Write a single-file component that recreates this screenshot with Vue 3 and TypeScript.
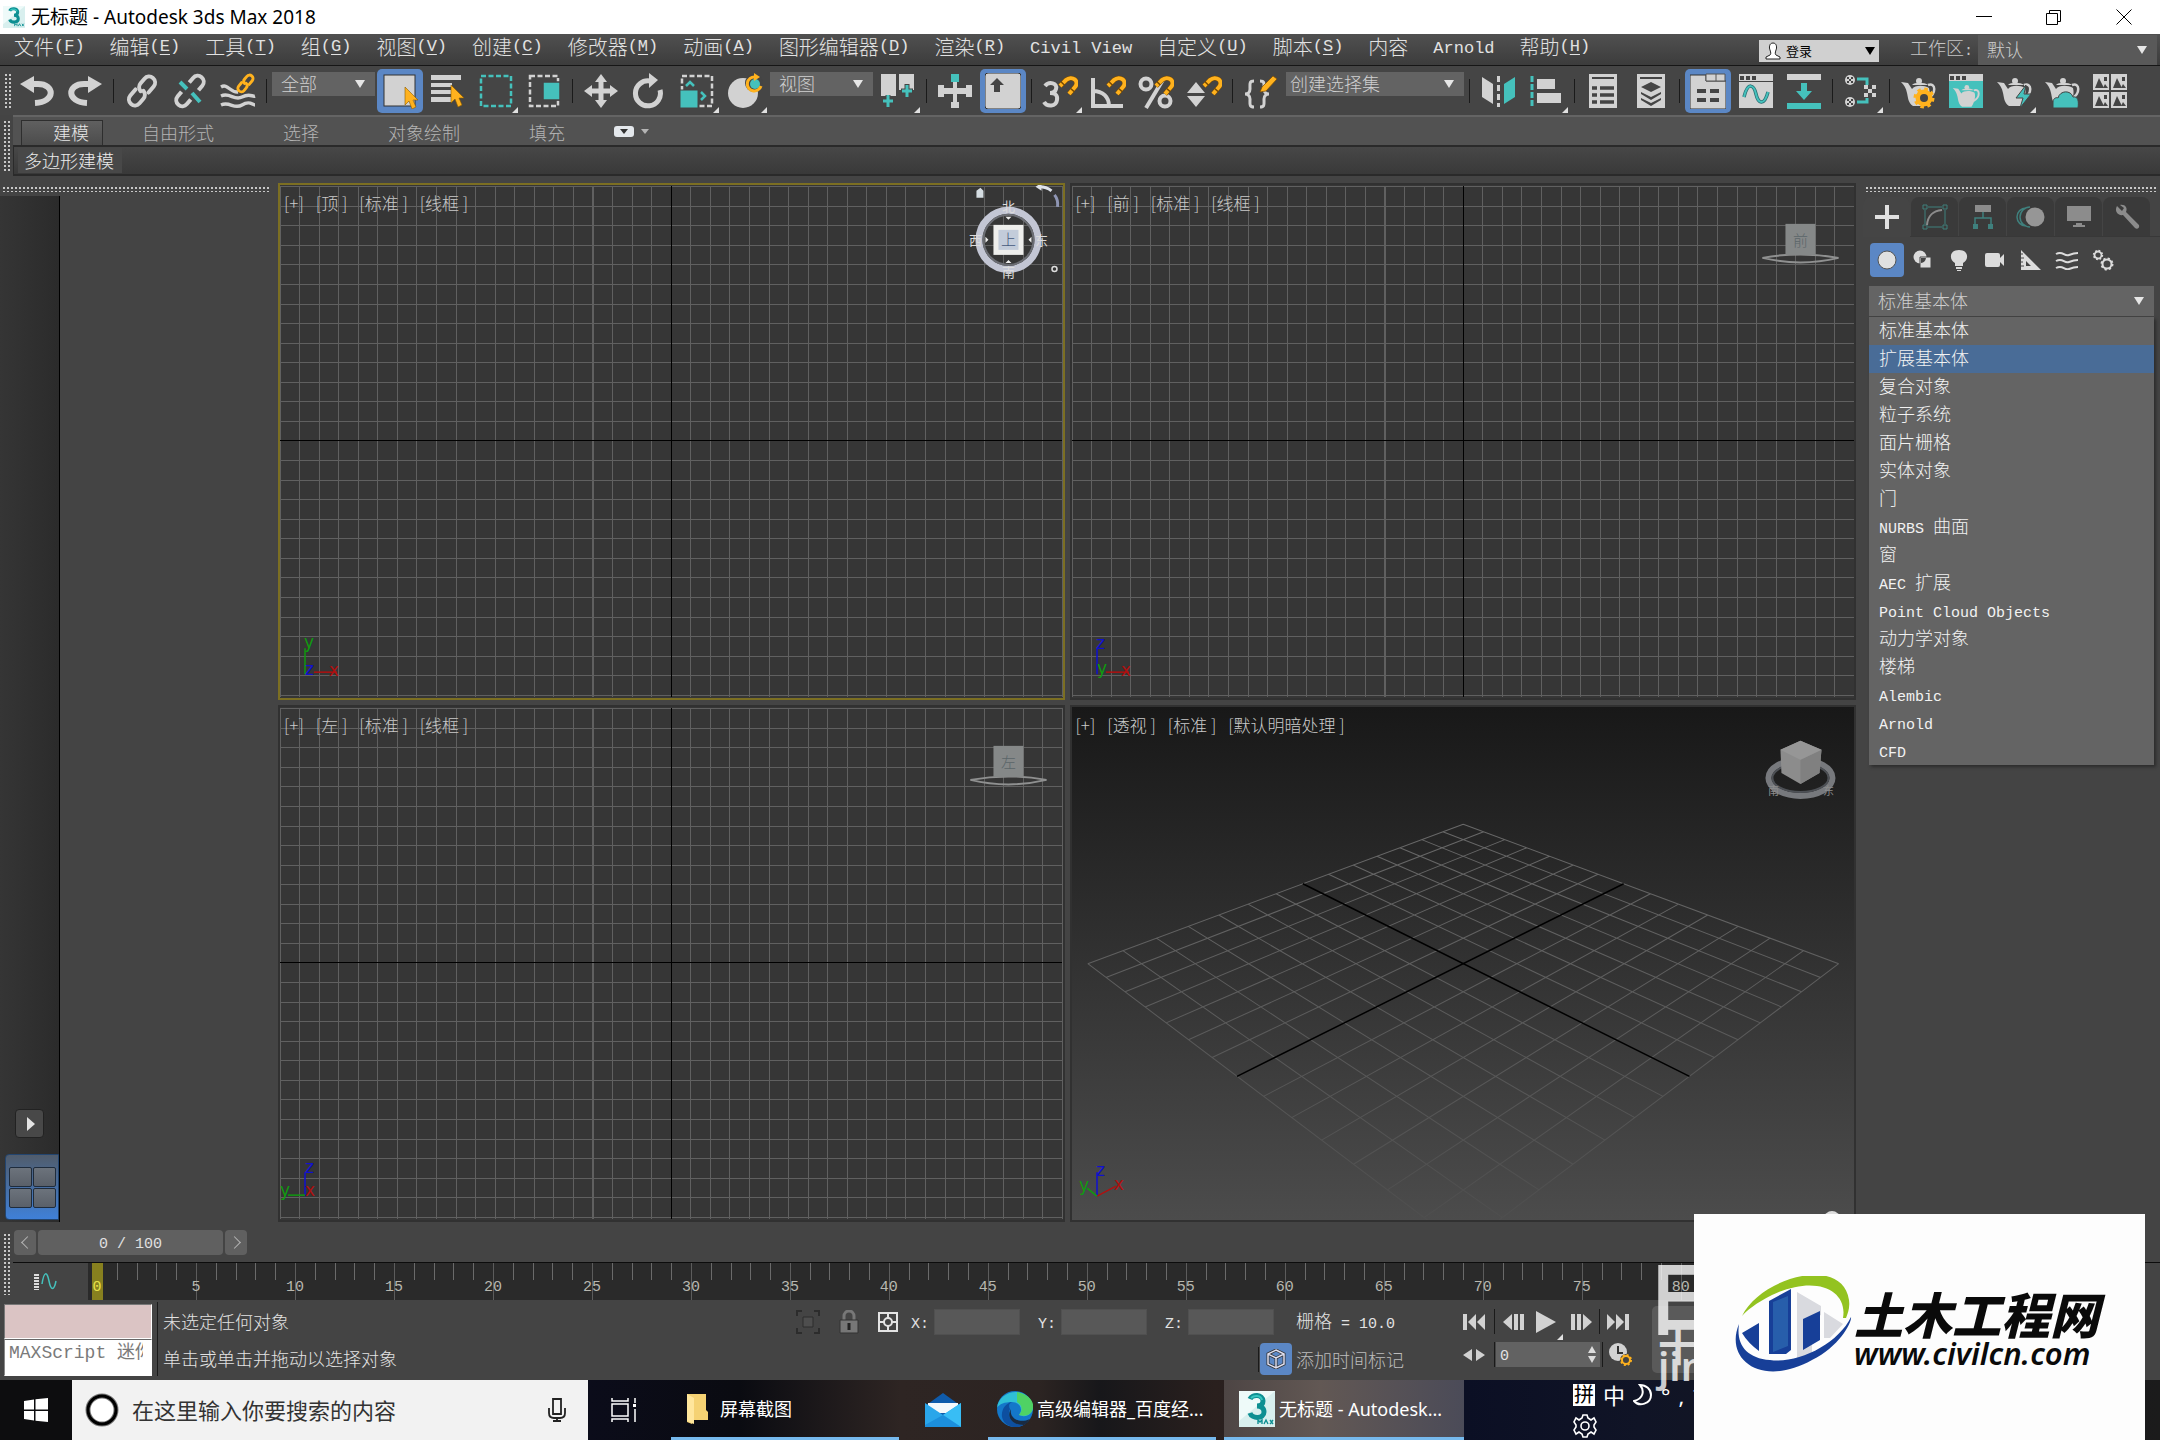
<script setup lang="ts">
import { h, ref } from 'vue'
import type { FunctionalComponent } from 'vue'

const L = '#d2d2d2'
const T = '#45c1bc'
const O = '#ffb21e'
const D = '#444444'

const cursor = (x: number, y: number) =>
  `<path transform="translate(${x} ${y})" d="M0 0V18L4 14L7 22L11 20L8 13H13Z" fill="${O}" stroke="#8a5a00" stroke-width=".6"/>`
const magnet = (x: number, y: number) =>
  `<path transform="translate(${x} ${y})" d="M1 10L7 4C13 -1 21 5 16 11L10 18" fill="none" stroke="#7a4b00" stroke-width="5"/>
   <path transform="translate(${x} ${y})" d="M1 10L7 4C13 -1 21 5 16 11L10 18" fill="none" stroke="${O}" stroke-width="4" stroke-dasharray="3 1.5 25 1.5 6"/>`
const chain = (c: string, w: number) =>
  `<g transform="rotate(-50 18 18)" fill="none" stroke="${c}" stroke-width="${w}" stroke-linecap="round">
   <path d="M15 12H7a6 6 0 0 0 0 12H13a6 6 0 0 0 6-5"/><path d="M21 24H29a6 6 0 0 0 0-12H23a6 6 0 0 0-6 5"/></g>`
const teapot = (c = L, ring = L) =>
  `<path d="M1 9L8 10L12 16C15 12 24 12 29 15C31 22 27 30 25 33H13C8 30 8 24 7 20C6 15 4 12 1 9Z" fill="${c}"/>
   <circle cx="19" cy="8" r="3" fill="${c}"/><path d="M12 12C14 9 25 9 28 12Z" fill="${c}"/>
   <path d="M28 12C36 9 37 21 27 26" fill="none" stroke="${ring}" stroke-width="2.5"/>`
const gear = (x: number, y: number, r: number, c: string, w: number) =>
  `<circle cx="${x}" cy="${y}" r="${r}" fill="none" stroke="${c}" stroke-width="${w}"/>
   <circle cx="${x}" cy="${y}" r="${r + w - 1}" fill="none" stroke="${c}" stroke-width="${w}" stroke-dasharray="${((r + w - 1) * Math.PI) / 8}"/>`
const check = (x: number, y: number) =>
  `<circle cx="${x}" cy="${y}" r="5" fill="${L}"/><path d="M${x - 3} ${y - 3}h2v2h2v-2h2v2h-2v2h2v2h-2v-2h-2v2h-2v-2h2v-2h-2z" fill="${D}"/>`
const logo3 =
  `<rect width="36" height="36" fill="#d8efee"/><path d="M0 0H36L0 30Z" fill="#eefaf9"/>
   <path d="M11 8C13 3 24 3 24 10C24 14 21 15 18 15C22 15 25 17 25 21C25 28 13 28 11 22" fill="none" stroke="#0d8f92" stroke-width="5"/>
   <path d="M12 7C15 4 22 4 23 9" fill="none" stroke="#37c6c0" stroke-width="2"/>
   <path d="M19 33v-4l2 2 2-2v4M25 33l2-4 2 4M31 29l3 4M34 29l-3 4" fill="none" stroke="#0d8f92" stroke-width="1.4"/>`

type Glyph = [number, number, string]
const glyphs: Record<string, Glyph> = {
  logo: [36, 36, logo3],
  undo: [36, 36, `<path d="M1 11L15 3V20Z" fill="${L}"/><path d="M14 11H19C36 11 37 29 16 30" fill="none" stroke="${L}" stroke-width="6"/>`],
  redo: [36, 36, `<path d="M35 11L21 3V20Z" fill="${L}"/><path d="M22 11H17C0 11 -1 29 20 30" fill="none" stroke="${L}" stroke-width="6"/>`],
  link: [36, 36, chain(L, 4)],
  unlink: [36, 36, `<g transform="rotate(-50 18 18)" fill="none" stroke="${L}" stroke-width="4"><path d="M12 12H6a6 6 0 0 0 0 12H12"/><path d="M24 24H30a6 6 0 0 0 0-12H24"/></g><path d="M8 9L15 16M20 20L28 29" stroke="${T}" stroke-width="4"/>`],
  bind: [36, 36, `<g fill="none" stroke="${L}" stroke-width="3.5"><path d="M1 14C8 10 10 20 18 19"/><path d="M1 23C10 19 14 28 22 24S32 24 35 23"/><path d="M1 32C10 28 14 37 22 32S32 32 35 32"/></g><g transform="translate(15 0) scale(.58)">${chain(O, 5)}</g>`],
  select: [36, 36, `<rect x="2" y="2" width="31" height="31" fill="${L}" stroke="#333"/>${cursor(23, 14)}`],
  byName: [36, 36, `<path d="M1 2H31V7H1ZM1 10H22V14H1ZM1 17H22V21H1ZM1 24H22V29H1Z" fill="${L}"/>${cursor(21, 12)}`],
  region: [36, 36, `<rect x="3" y="3" width="30" height="30" fill="none" stroke="${T}" stroke-width="2.5" stroke-dasharray="5 2.5"/>`],
  crossing: [36, 36, `<rect x="4" y="3" width="28" height="30" fill="none" stroke="${L}" stroke-width="2.5" stroke-dasharray="5 2.5"/><rect x="17" y="9" width="17" height="18" fill="${T}" stroke="${D}" stroke-width="1.5"/>`],
  move: [36, 36, `<path d="M18 1L24 9H20.500V15.500H27V12L35 18L27 24V20.500H20.500V27H24L18 35L12 27H15.500V20.500H9V24L1 18L9 12V15.500H15.500V9H12Z" fill="${L}"/>`],
  rotate: [36, 36, `<path d="M19 8A12.500 12.500 0 1 0 29 17" fill="none" stroke="${L}" stroke-width="5"/><path d="M18 0L27 7L18 15Z" fill="${L}"/>`],
  scale: [36, 36, `<rect x="3" y="3" width="30" height="30" fill="none" stroke="${L}" stroke-width="2.500" stroke-dasharray="5 2.500"/><rect x="1" y="17" width="18" height="18" fill="${T}" stroke="${D}"/><path d="M7 13L11 9L15 13M22 19L26 23L22 27" fill="none" stroke="${T}" stroke-width="2.500"/>`],
  place: [36, 36, `<circle cx="16" cy="20" r="15" fill="${L}"/><circle cx="27" cy="10" r="9" fill="${D}"/><circle cx="28" cy="11" r="5" fill="${T}"/><path d="M28 4A7 7 0 1 0 34 13" fill="none" stroke="${O}" stroke-width="3"/><path d="M27 0L33 4L27 8Z" fill="${O}"/>`],
  pivot: [36, 36, `<path d="M1 1H16V23H1ZM19 1H34V17H19Z" fill="${L}"/><path d="M8 22V35M2 28H14M27 11V25M21 18H33" stroke="${D}" stroke-width="5"/><path d="M8 22V34M3 28H13M27 12V24M22 18H32" stroke="${T}" stroke-width="3"/>`],
  manipulate: [36, 36, `<path d="M16 9H20V15H29V12H35V24H29V21H20V29H22V35H14V29H16V21H7V24H1V12H7V15H16Z" fill="${L}"/><rect x="14" y="1" width="8" height="8" fill="${T}"/>`],
  override: [36, 36, `<rect x="0" y="0" width="36" height="36" rx="3" fill="${L}" stroke="#333"/><path d="M12 5L19 12H15V19H9V12H5Z" fill="#444"/>`],
  snap: [36, 36, `<path d="M3 13C7 8 16 10 14 16C13 20 10 20 8 20C12 20 16 21 15 27C14 34 5 34 2 29" fill="none" stroke="${L}" stroke-width="4"/>${magnet(17, 3)}`],
  angle: [36, 36, `<path d="M3 5V33H33M3 18C13 18 19 24 19 33" fill="none" stroke="${L}" stroke-width="4"/>${magnet(17, 3)}`],
  percent: [36, 36, `<circle cx="8" cy="11" r="5.500" fill="none" stroke="${L}" stroke-width="4"/><circle cx="27" cy="28" r="5.500" fill="none" stroke="${L}" stroke-width="4"/><path d="M26 5L8 35" stroke="${L}" stroke-width="4"/>${magnet(17, 3)}`],
  spinner: [36, 36, `<path d="M10 9L19 20H1ZM10 34L19 23H1Z" fill="${L}"/>${magnet(17, 3)}`],
  sets: [36, 36, `<path d="M11 8C6 8 7 11 7 16C7 19 5 21 2 21C5 21 7 23 7 26C7 31 6 34 11 34M17 8C22 8 21 11 21 16C21 19 23 21 26 21C23 21 21 23 21 26C21 31 22 34 17 34" fill="none" stroke="${L}" stroke-width="3"/><path d="M30 3L34 6L23 18L17 19L19 14Z" fill="${O}" stroke="#7a4b00" stroke-width=".7"/>`],
  mirror: [36, 36, `<path d="M2 4L13 11V31L2 24Z" fill="${L}"/><path d="M35 4L24 11V31L35 24Z" fill="${T}"/><path d="M18.500 3V34" stroke="${L}" stroke-width="3" stroke-dasharray="6 3"/>`],
  align: [36, 36, `<path d="M4 3V34" stroke="${T}" stroke-width="3" stroke-dasharray="6 2"/><path d="M9 6H27V16H9ZM9 20H33V30H9Z" fill="${L}"/>`],
  list: [36, 36, `<rect x="4" y="1" width="28" height="34" fill="${L}"/><path d="M7 5H29" stroke="${D}" stroke-width="2"/><path d="M7 15H12M15 15H29M7 22H12M15 22H29M7 29H12M15 29H29" stroke="${D}" stroke-width="3.500"/>`],
  layers: [36, 36, `<rect x="4" y="1" width="28" height="34" fill="${L}"/><path d="M7 5H29" stroke="${D}" stroke-width="2"/><path d="M18 9L28 14L18 19L8 14ZM8 19L18 24L28 19V21L18 27L8 21ZM8 25L18 30L28 25V27L18 33L8 27Z" fill="${D}"/>`],
  ribbonToggle: [36, 36, `<path d="M0 2H16V8H36V36H0Z" fill="${L}" stroke="#333"/><path d="M16 1H35V8H16ZM26 1V8" fill="${L}" stroke="#555"/><path d="M7 18H16M20 18H29M7 27H16M20 27H29" stroke="${D}" stroke-width="4"/>`],
  curve: [36, 36, `<rect x="1" y="1" width="34" height="34" fill="${L}"/><path d="M1 8.500H35" stroke="${D}"/><path d="M2 3H6V7H2ZM8 3H12V7H8ZM14 3H18V7H14Z" fill="${D}"/><path d="M6 24C10 8 16 12 18 21S26 34 30 19" fill="none" stroke="#2a6f74" stroke-width="3.500"/><path d="M6 24C10 8 16 12 18 21S26 34 30 19" fill="none" stroke="${T}" stroke-width="2"/>`],
  dope: [36, 36, `<rect x="1" y="1" width="34" height="6" fill="${L}"/><rect x="1" y="30" width="34" height="6" fill="${T}"/><path d="M15 10H21V18H26L18 27L10 18H15Z" fill="${T}"/>`],
  schematic: [36, 36, `${check(7, 7)}${check(7, 29)}<path d="M14 6H24V12M14 29H24V25" fill="none" stroke="${T}" stroke-width="3"/><path d="M21 12h4v4h4v-4h4v4h-4v4h4v4h-4v-4h-4v4h-4v-4h4v-4h-4z" fill="${L}"/>`],
  renderSetup: [36, 36, `${teapot()}<circle cx="24" cy="25" r="8" fill="${O}"/>${gear(24, 25, 7, O, 3)}<circle cx="24" cy="25" r="4" fill="${D}"/>`],
  renderFrame: [36, 36, `<rect x="1" y="1" width="34" height="34" fill="${T}"/><rect x="1" y="1" width="34" height="7" fill="${L}"/><path d="M2 3H6V7H2ZM8 3H12V7H8ZM14 3H18V7H14Z" fill="${D}"/><g transform="translate(4 8) scale(.78)">${teapot()}</g>`],
  render: [36, 36, `${teapot()}<path d="M30 12L20 25H27L24 35L35 21H28Z" fill="${T}" stroke="${D}"/>`],
  cloud: [36, 36, `${teapot()}<path d="M9 35V29C9 25 13 24 14 25C16 17 27 17 29 24C34 23 35 28 34 35Z" fill="${T}" stroke="${D}"/>`],
  gallery: [36, 36, `<path d="M1 1H17V17H1ZM19 1H35V17H19ZM1 19H17V35H1ZM19 19H35V35H19Z" fill="${L}"/><path d="M3 15L7 5L12 15ZM21 15L25 5L30 15ZM3 33L7 23L12 33ZM21 33L25 23L30 33Z" fill="${D}"/><path d="M12 4h3v4h-3zM30 4h3v4h-3zM12 22h3v4h-3zM30 22h3v4h-3zM11 15l2-4 3 4zM29 15l2-4 3 4zM11 33l2-4 3 4zM29 33l2-4 3 4z" fill="${D}"/>`],
  minimize: [16, 16, `<path d="M0 7.500H16" stroke="#000"/>`],
  restore: [16, 16, `<path d="M.5 4.500H11.500V15.500H.5ZM3.500 4V1.500H14.500V12.500H12" fill="none" stroke="#000"/>`],
  close: [16, 16, `<path d="M.5 .5L15.500 15.500M15.500 .5L.5 15.500" stroke="#000"/>`],
  user: [16, 18, `<path d="M8 1C4 1 4 6 5 8C6 11 6 12 5 13L1 15V17H15V15L11 13C10 12 10 11 11 8C12 6 12 1 8 1Z" fill="#fff" stroke="#222"/>`],
  create: [24, 24, `<path d="M10 0H14V10H24V14H14V24H10V14H0V10H10Z" fill="#e0e0e0"/>`],
  modify: [26, 26, `<path d="M6 3H20M3 6V20M23 6V20M6 23H20" stroke="#3f807d"/><path d="M1 1H5V5H1ZM21 1H25V5H21ZM1 21H5V25H1ZM21 21H25V25H21Z" fill="none" stroke="#3f807d"/><path d="M5 21C6 11 11 7 20 6" fill="none" stroke="#8c8c8c" stroke-width="2"/>`],
  hierarchy: [26, 26, `<path d="M5 1H21V8H5Z" fill="#8c8c8c"/><path d="M13 8V14M5 20V14H21V20" fill="none" stroke="#3f807d" stroke-width="1.500"/><path d="M3 20H8V25H3ZM18 20H23V25H18Z" fill="#3f807d"/>`],
  motion: [30, 24, `<path d="M10 3A9 9 0 0 0 10 21M14 2A10 10 0 0 0 14 22" fill="none" stroke="#3f807d" stroke-width="1.500"/><circle cx="19" cy="12" r="9.500" fill="#969696"/>`],
  display: [26, 24, `<path d="M1 1H25V16H1ZM10 18H16V20H19V22H7V20H10Z" fill="#8c8c8c"/>`],
  utility: [26, 26, `<path d="M3 2L8 7L10 4L6 1C11 0 14 4 12 8L25 21C26 24 23 26 21 24L9 11C4 12 0 7 3 2Z" fill="#8c8c8c"/>`],
  geometry: [20, 20, `<circle cx="10" cy="10" r="9" fill="#e0e0e0" stroke="#555"/>`],
  shapes: [20, 20, `<circle cx="7" cy="7" r="6.500" fill="#dcdcdc"/><path d="M7 7H18V18H7Z" fill="#dcdcdc" stroke="${D}"/><path d="M8 8H13A6 6 0 0 1 8 13Z" fill="${D}"/>`],
  light: [20, 22, `<path d="M10 1C0 1 0 11 6 14V17H14V14C20 11 20 1 10 1ZM7 18H13V20H7ZM8 21H12V22H8Z" fill="#dcdcdc"/>`],
  camera: [22, 20, `<path d="M1 5Q1 3 3 3H14Q16 3 16 5V8L20 4V16L16 12V15Q16 17 14 17H3Q1 17 1 15Z" fill="#dcdcdc"/>`],
  helper: [22, 22, `<path d="M1 1L21 21H1ZM6 12V17H11Z" fill="#dcdcdc" fill-rule="evenodd"/><path d="M1 5h2M1 9h3M1 13h2M1 17h3" stroke="${D}"/>`],
  warp: [24, 20, `<path d="M1 4C8 0 9 7 14 5S20 3 23 3M1 11C8 7 9 14 14 12S20 10 23 10M1 18C8 14 9 21 14 19S20 17 23 17" fill="none" stroke="#dcdcdc" stroke-width="2"/>`],
  systems: [22, 22, `${gear(6, 6, 3.5, '#dcdcdc', 1.8)}${gear(15, 15, 4.5, '#dcdcdc', 2)}`],
  miniCurve: [24, 18, `<path d="M3.500 1V17" stroke="#dcdcdc" stroke-width="5" stroke-dasharray="2 1"/><path d="M9 11C11 -2 14 -2 16 8S21 18 23 8" fill="none" stroke="${T}" stroke-width="1.500"/>`],
  isolate: [24, 24, `<path d="M1 6V1H6M18 1H23V6M23 18V23H18M6 23H1V18" fill="none" stroke="#2c2c2c" stroke-width="2"/><path d="M7 7H17V17H7Z" fill="#4e4e4e" stroke="#2c2c2c"/>`],
  lock: [20, 24, `<path d="M5 10V6A5 5 0 0 1 15 6V10" fill="none" stroke="#777" stroke-width="3"/><path d="M1 10H19V23H1Z" fill="#777" stroke="#333"/><path d="M10 13V20" stroke="#222" stroke-width="3"/>`],
  absolute: [22, 22, `<path d="M2 2H20V20H2ZM11 2V20M2 11H20" fill="none" stroke="#e4e4e4" stroke-width="2"/><circle cx="11" cy="11" r="4" fill="${D}" stroke="#e4e4e4" stroke-width="2"/>`],
  tagCube: [20, 20, `<path d="M10 1L18 5V15L10 19L2 15V5ZM2 5L10 9L18 5M10 9V19" fill="none" stroke="#333" stroke-width="3"/><path d="M10 1L18 5V15L10 19L2 15V5ZM2 5L10 9L18 5M10 9V19" fill="none" stroke="#dde" stroke-width="1.500"/>`],
  toStart: [22, 18, `<path d="M0 1H4V17H0ZM13 1V17L5 9ZM22 1V17L14 9Z" fill="${L}"/>`],
  prev: [22, 18, `<path d="M10 1V17L1 9ZM12 1H16V17H12ZM18 1H22V17H18Z" fill="${L}"/>`],
  play: [22, 22, `<path d="M1 0L21 11L1 22Z" fill="${L}"/>`],
  next: [22, 18, `<path d="M12 1V17L21 9ZM0 1H4V17H0ZM6 1H10V17H6Z" fill="${L}"/>`],
  toEnd: [22, 18, `<path d="M18 1H22V17H18ZM9 1V17L17 9ZM0 1V17L8 9Z" fill="${L}"/>`],
  keyMode: [22, 12, `<path d="M9 0V12L0 6ZM13 0V12L22 6Z" fill="${L}"/>`],
  timeConfig: [24, 24, `<circle cx="9" cy="9" r="9" fill="${L}"/><path d="M9 3V10H14" fill="none" stroke="#333" stroke-width="2"/><circle cx="17" cy="17" r="6" fill="${D}"/>${gear(17, 17, 4, O, 2)}`],
  windows: [26, 26, `<path d="M1 4L11 2.500V12.500H1ZM12.500 2.300L25 1V12.500H12.500ZM1 14H11V23.500L1 22ZM12.500 14H25V25L12.500 23.700Z" fill="#fff"/>`],
  cortana: [34, 34, `<circle cx="17" cy="17" r="14" fill="#fff" stroke="#777" stroke-width="5"/><circle cx="17" cy="17" r="14" fill="none" stroke="#000" stroke-width="3"/>`],
  mic: [18, 24, `<path d="M5 1H13V16H5ZM1 10V15Q1 20 6 20H12Q17 20 17 15V10M9 20V23M5 23H13" fill="none" stroke="#222" stroke-width="1.800"/>`],
  taskView: [26, 24, `<path d="M1 0V3H17V0M1 24V21H17V24M1 6H17V18H1ZM24 0V5M24 11V24" fill="none" stroke="#fff" stroke-width="1.500"/><path d="M22 6H25V9H22Z" fill="#fff"/>`],
  folder: [22, 32, `<path d="M1 1H20V17L22 19V27H8L6 31L1 29Z" fill="#f5d273"/><path d="M1 1L8 5V31L1 28Z" fill="#ffe69c"/>`],
  mail: [36, 34, `<path d="M0 13L18 0L36 13V34H0Z" fill="#0f5bab"/><path d="M3 10H33V20H3Z" fill="#f4f8fb"/><path d="M0 10L18 22L36 10V34H0Z" fill="#2aa6ea"/><path d="M18 22L36 10V34Z" fill="#38bdf5"/><path d="M18 22L36 34H0V32Z" fill="#1c8fdc"/>`],
  edge: [36, 36, `<circle cx="18" cy="18" r="18" fill="#1477c9"/><path d="M0 17C2 -2 32 -6 36 16C36 24 28 27 22 24C27 18 22 11 15 11C8 11 2 13 0 17Z" fill="#2fbfd6"/><path d="M20 1C34 4 37 12 36 17C35 24 28 26 22 24C27 18 24 13 20 11Z" fill="#4fd264"/><path d="M13 18C9 26 16 35 28 33C20 39 7 36 5 26C4 18 9 12 15 11C11 13 12 16 13 18Z" fill="#0d4fa0"/><path d="M14 18C12 27 22 33 33 28C31 31 29 33 27 34C15 34 9 26 14 18Z" fill="#1a2a40"/>`],
  moon: [20, 24, `<path d="M7 2C12 8 10 16 1 18C6 24 18 21 18 12C18 6 13 2 7 2Z" fill="none" stroke="#fff" stroke-width="2"/>`],
  cog: [24, 24, `<circle cx="12" cy="12" r="4" fill="none" stroke="#fff" stroke-width="1.600"/><path d="M10 1H14L15 4L18 6L21 4L23 8L21 11V13L23 16L21 20L18 18L15 20L14 23H10L9 20L6 18L3 20L1 16L3 13V11L1 8L3 4L6 6L9 4Z" fill="none" stroke="#fff" stroke-width="1.600"/>`],
}

const Icon: FunctionalComponent<{ name: string }> = (p) => {
  const [w, ht, body] = glyphs[p.name]
  return h('svg', { width: w, height: ht, viewBox: `0 0 ${w} ${ht}`, innerHTML: body, 'aria-hidden': 'true' })
}
Icon.props = ['name']

/* Wraps half-width runs in their own span so they keep half the advance of a full-width character. */
const Mixed: FunctionalComponent<{ text: string }> = (p) =>
  h('span', { class: 'mixed' }, p.text.split(/([\x20-\x7e]+)/).filter(Boolean)
    .map((s) => (/^[\x20-\x7e]/.test(s) ? h('span', { class: 'half' }, s) : s)))
Mixed.props = ['text']

const menus: [string, string?][] = [
  ['文件', 'F'], ['编辑', 'E'], ['工具', 'T'], ['组', 'G'], ['视图', 'V'], ['创建', 'C'], ['修改器', 'M'], ['动画', 'A'],
  ['图形编辑器', 'D'], ['渲染', 'R'], ['Civil View'], ['自定义', 'U'], ['脚本', 'S'], ['内容'], ['Arnold'], ['帮助', 'H'],
]

interface Tool { icon?: string; on?: boolean; more?: boolean; sep?: boolean; select?: string; wide?: boolean }
const sep: Tool = { sep: true }
const tools: Tool[] = [
  { icon: 'undo' }, { icon: 'redo' }, sep, { icon: 'link' }, { icon: 'unlink' }, { icon: 'bind' }, sep,
  { select: '全部' }, { icon: 'select', on: true }, { icon: 'byName' }, { icon: 'region', more: true }, { icon: 'crossing' }, sep,
  { icon: 'move' }, { icon: 'rotate' }, { icon: 'scale', more: true }, { icon: 'place', more: true },
  { select: '视图' }, { icon: 'pivot', more: true }, sep, { icon: 'manipulate' }, { icon: 'override', on: true }, sep,
  { icon: 'snap', more: true }, { icon: 'angle' }, { icon: 'percent' }, { icon: 'spinner' }, sep,
  { icon: 'sets' }, { select: '创建选择集', wide: true }, sep, { icon: 'mirror' }, { icon: 'align', more: true }, sep,
  { icon: 'list' }, { icon: 'layers' }, sep, { icon: 'ribbonToggle', on: true }, { icon: 'curve' }, { icon: 'dope' }, sep,
  { icon: 'schematic', more: true }, sep, { icon: 'renderSetup' }, { icon: 'renderFrame' }, { icon: 'render', more: true },
  { icon: 'cloud' }, { icon: 'gallery' },
]

const ribbonTabs = ['建模', '自由形式', '选择', '对象绘制', '填充']
const panelTabs = ['create', 'modify', 'hierarchy', 'motion', 'display', 'utility']
const categories = ['geometry', 'shapes', 'light', 'camera', 'helper', 'warp', 'systems']
const kinds = ['标准基本体', '扩展基本体', '复合对象', '粒子系统', '面片栅格', '实体对象', '门', 'NURBS 曲面', '窗', 'AEC 扩展',
  'Point Cloud Objects', '动力学对象', '楼梯', 'Alembic', 'Arnold', 'CFD']
const hovered = ref('扩展基本体')

interface Axis { x: number; y: number; dx: number; dy: number; tx: number; ty: number; name: string; color: string }
interface View { id: string; labels: string[]; cube: string; axes: Axis[]; persp?: boolean; active?: boolean }
const RED = '#b01010'
const GREEN = '#109a10'
const BLUE = '#1010d0'
const ax = (name: string, color: string, x: number, y: number, dx: number, dy: number, tx: number, ty: number): Axis =>
  ({ name, color, x, y, dx, dy, tx, ty })
const views: View[] = [
  { id: 'top', labels: ['[+]', '[顶 ]', '[标准 ]', '[线框 ]'], cube: '上', active: true,
    axes: [ax('y', GREEN, 27, 491, 0, -26, 26, 465), ax('x', RED, 36, 489, 23, 0, 51, 493), ax('z', BLUE, 27, 491, 0, 0, 27, 492)] },
  { id: 'front', labels: ['[+]', '[前 ]', '[标准 ]', '[线框 ]'], cube: '前',
    axes: [ax('z', BLUE, 27, 491, 0, -26, 26, 466), ax('x', RED, 36, 489, 23, 0, 51, 493), ax('y', GREEN, 27, 491, 0, 0, 27, 491)] },
  { id: 'left', labels: ['[+]', '[左 ]', '[标准 ]', '[线框 ]'], cube: '左',
    axes: [ax('z', BLUE, 27, 491, 0, -24, 27, 468), ax('y', GREEN, 27, 490, -17, 0, 2, 491), ax('x', RED, 27, 491, 0, 0, 27, 491)] },
  { id: 'persp', labels: ['[+]', '[透视 ]', '[标准 ]', '[默认明暗处理 ]'], cube: '', persp: true,
    axes: [ax('z', BLUE, 27, 491, 0, -24, 26, 471), ax('x', RED, 27, 491, 19, -10, 44, 485), ax('y', GREEN, 27, 491, -10, -8, 9, 486)] },
]

const STEP = 19.55
const cols = Array.from({ length: 41 }, (_, i) => i - 20)
const rows = Array.from({ length: 27 }, (_, i) => i - 13)
const CX = 393
const CY = 258

/* Ground plane: u and v run from -7 to 7 along the two world axes. */
const project = (u: number, v: number): string => {
  const s = u + v
  const w = 1 - 0.0243 * s
  return `${(393 + (26.8 * (u - v)) / w).toFixed(1)} ${((963.7 - 10.07 * s) / w - 705).toFixed(1)}`
}
const line = (i: number) => `M${project(i, -7)}L${project(i, 7)}M${project(-7, i)}L${project(7, i)}`
const ground = Array.from({ length: 15 }, (_, i) => i - 7).filter((i) => i !== 0).map(line).join('')
const groundAxes = line(0)

const frames = Array.from({ length: 101 }, (_, i) => i)
const lastLabel = 80
const coords = ['X:', 'Y:', 'Z:']
</script>

<template>
  <div class="desktop">
    <header class="title">
      <Icon name="logo" class="title-logo" />
      <h1>无标题 - Autodesk 3ds Max 2018</h1>
      <button aria-label="最小化"><Icon name="minimize" /></button>
      <button aria-label="还原"><Icon name="restore" /></button>
      <button aria-label="关闭"><Icon name="close" /></button>
    </header>

    <nav class="menu">
      <button v-for="m in menus" :key="m[0]"><Mixed :text="m[0]" /><span v-if="m[1]" class="half">(<u>{{ m[1] }}</u>)</span></button>
      <div class="menu-end">
        <button class="login"><Icon name="user" /><span>登录</span><i class="caret"></i></button>
        <label class="ws-label" for="workspace"><Mixed text="工作区:" /></label>
        <div class="drop workspace"><select id="workspace"><option>默认</option></select></div>
      </div>
    </nav>

    <div class="toolbar">
      <i class="grip"></i>
      <template v-for="(t, i) in tools" :key="i">
        <i v-if="t.sep" class="sep"></i>
        <div v-else-if="t.select" class="drop" :class="{ wide: t.wide }">
          <select :aria-label="t.select"><option>{{ t.select }}</option></select>
        </div>
        <button v-else class="tool" :class="{ on: t.on, more: t.more }" :aria-label="t.icon"><Icon :name="t.icon!" /></button>
      </template>
    </div>

    <section class="ribbon">
      <i class="grip"></i>
      <div class="ribbon-body">
        <div class="ribbon-tabs">
          <button v-for="(t, i) in ribbonTabs" :key="t" :class="{ current: i === 0 }">{{ t }}</button>
          <button class="ribbon-min" aria-label="最小化功能区"><span class="pill"><i class="caret"></i></span><i class="caret"></i></button>
        </div>
        <div class="ribbon-panel"><button>多边形建模</button></div>
      </div>
    </section>

    <main class="work">
      <aside class="left">
        <i class="grip-h"></i>
        <div class="strip">
          <button class="expand" aria-label="展开"></button>
          <button class="layout" aria-label="视口布局"><i></i><i></i><i></i><i></i></button>
        </div>
      </aside>

      <div class="views">
        <section v-for="v in views" :key="v.id" class="view" :class="{ active: v.active, persp: v.persp }">
          <svg class="canvas" viewBox="0 0 786 517" preserveAspectRatio="xMidYMid slice">
            <template v-if="!v.persp">
              <g stroke="#606060" shape-rendering="crispEdges">
                <line v-for="c in cols" :key="'c' + c" :x1="CX + c * STEP" :x2="CX + c * STEP" y1="3" y2="514" />
                <line v-for="r in rows" :key="'r' + r" x1="2" x2="784" :y1="CY + r * STEP" :y2="CY + r * STEP" />
              </g>
              <path :d="`M${CX} 3V514M2 ${CY}H784`" stroke="#000" shape-rendering="crispEdges" />
            </template>
            <template v-else>
              <defs>
                <linearGradient id="fade" gradientUnits="userSpaceOnUse" x1="0" y1="120" x2="0" y2="517">
                  <stop offset="0" stop-color="#686868" /><stop offset=".6" stop-color="#585858" /><stop offset="1" stop-color="#4e4e4e" />
                </linearGradient>
              </defs>
              <path :d="ground" fill="none" stroke="url(#fade)" />
              <path :d="groundAxes" fill="none" stroke="#000" stroke-width="1.500" />
            </template>

            <g v-if="v.id === 'top'">
              <circle cx="730" cy="57" r="29.500" fill="none" stroke="#c3c6d4" stroke-width="7" />
              <circle cx="730" cy="57" r="25" fill="none" stroke="#6c6e74" stroke-width="2" />
              <rect x="715" y="42" width="30" height="30" fill="#eeeeec" />
              <rect x="720" y="47" width="20" height="20" fill="#c3ccda" />
              <path d="M730 37l-3-3h6zM730 77l-3 3h6zM710 57l-3-3v6zM750 57l3-3v6z" fill="#eee" />
              <path d="M698 15V8L702 5L705 8V15Z" fill="#d5dde2" />
              <path d="M761 4Q768 4 773 8" fill="none" stroke="#dfe3ea" stroke-width="3" />
              <path d="M757 4L763 0V8Z" fill="#dfe3ea" />
              <path d="M776 12Q780 17 779 24" fill="none" stroke="#8f96b4" stroke-width="3" />
              <circle cx="776" cy="86" r="2.500" fill="none" stroke="#ddd" stroke-width="1.500" />
              <g class="compass">
                <text x="730" y="28">北</text><text x="730" y="94">南</text><text x="697" y="62">西</text><text x="763" y="62">东</text>
              </g>
              <text class="face lit" x="730" y="62">上</text>
            </g>
            <g v-else-if="v.persp">
              <ellipse cx="730" cy="73" rx="32" ry="18" fill="none" stroke="#77797d" stroke-width="6" />
              <ellipse cx="730" cy="73" rx="28" ry="14" fill="none" stroke="#4d5055" stroke-width="2" />
              <path d="M710 45L730 36L751 45L749 68L730 79L711 68Z" fill="#8c8c8c" />
              <path d="M730 55L751 45L749 68L730 79Z" fill="#808080" />
              <path d="M710 45L730 55L751 45L730 36Z" fill="#969696" />
              <g class="compass dim"><text x="703" y="90">南</text><text x="758" y="90">东</text></g>
            </g>
            <g v-else>
              <path d="M692 75Q730 68 768 75Q730 84 692 75Z" fill="none" stroke="#8f9090" stroke-width="2" />
              <rect x="715" y="41" width="30" height="31" fill="#858888" />
              <text class="face" x="730" y="63">{{ v.cube }}</text>
            </g>

            <g v-for="a in v.axes" :key="a.name" class="axis">
              <path :d="`M${a.x} ${a.y}l${a.dx} ${a.dy}`" :stroke="a.color" stroke-width="1.500" />
              <text :x="a.tx" :y="a.ty" :fill="a.color">{{ a.name }}</text>
            </g>
          </svg>
          <div class="labels"><button v-for="l in v.labels" :key="l">{{ l }}</button></div>
        </section>
      </div>

      <aside class="command">
        <i class="grip-h"></i>
        <div class="ptabs">
          <button v-for="(t, i) in panelTabs" :key="t" :class="{ current: i === 0 }" :aria-label="t"><Icon :name="t" /></button>
        </div>
        <div class="cats">
          <button v-for="(c, i) in categories" :key="c" :class="{ current: i === 0 }" :aria-label="c"><Icon :name="c" /></button>
        </div>
        <div class="drop kind"><select aria-label="对象类型"><option>标准基本体</option></select></div>
        <ul class="kinds" role="listbox">
          <li v-for="k in kinds" :key="k" role="option" :aria-selected="k === hovered" :class="{ hovered: k === hovered }" @mouseenter="hovered = k"><Mixed :text="k" /></li>
        </ul>
      </aside>
    </main>

    <section class="time">
      <i class="grip"></i>
      <div class="time-body">
        <div class="slider">
          <button class="step" aria-label="上一帧"><i class="chev"></i></button>
          <button class="thumb"><Mixed text="0 / 100" /></button>
          <button class="step" aria-label="下一帧"><i class="chev right"></i></button>
        </div>
        <div class="track-row">
          <button class="mini" aria-label="迷你曲线编辑器"><Icon name="miniCurve" /></button>
          <ol class="track">
            <li v-for="f in frames" :key="f" :class="{ major: f % 5 === 0, now: f === 0 }"><span v-if="f % 5 === 0 && f <= lastLabel">{{ f }}</span></li>
          </ol>
        </div>
      </div>
    </section>

    <section class="status">
      <div class="script">
        <div class="pink"></div>
        <input aria-label="MAXScript" value="MAXScript 迷你侦听器" />
      </div>
      <i class="bar tall"></i>
      <div class="prompts"><p>未选定任何对象</p><p>单击或单击并拖动以选择对象</p></div>
      <div class="coords">
        <div class="coord-row">
          <button aria-label="孤立"><Icon name="isolate" /></button>
          <button aria-label="锁定"><Icon name="lock" /></button>
          <button aria-label="绝对模式"><Icon name="absolute" /></button>
          <label v-for="c in coords" :key="c"><Mixed :text="c" /><input type="text" /></label>
          <span class="gridsize"><Mixed text="栅格 = 10.0" /></span>
        </div>
        <div class="tag-row">
          <i class="bar"></i>
          <button class="tag" aria-label="时间标记"><Icon name="tagCube" /></button>
          <span>添加时间标记</span>
        </div>
      </div>
      <div class="playback">
        <div class="play-row">
          <button aria-label="转至开头"><Icon name="toStart" /></button><i class="bar"></i>
          <button aria-label="上一帧"><Icon name="prev" /></button>
          <button aria-label="播放" class="more"><Icon name="play" /></button>
          <button aria-label="下一帧"><Icon name="next" /></button><i class="bar"></i>
          <button aria-label="转至结尾"><Icon name="toEnd" /></button>
        </div>
        <div class="play-row">
          <button aria-label="关键点模式"><Icon name="keyMode" /></button><i class="bar"></i>
          <div class="frame"><input aria-label="当前帧" value="0" /><i class="up"></i><i class="down"></i></div><i class="bar"></i>
          <button aria-label="时间配置"><Icon name="timeConfig" /></button>
        </div>
      </div>
      <div class="keys"></div>
    </section>

    <footer class="taskbar">
      <button class="start" aria-label="开始"><Icon name="windows" /></button>
      <label class="search"><Icon name="cortana" /><input placeholder="在这里输入你要搜索的内容" /><Icon name="mic" /></label>
      <button class="tview" aria-label="任务视图"><Icon name="taskView" /></button>
      <button class="task folder"><Icon name="folder" /><span>屏幕截图</span></button>
      <button class="mail" aria-label="邮件"><Icon name="mail" /></button>
      <button class="task edge"><Icon name="edge" /><span>高级编辑器_百度经...</span></button>
      <button class="task max"><Icon name="logo" /><span>无标题 - Autodesk...</span></button>
      <div class="tray">
        <div class="ime"><b>拼</b><span>中</span><Icon name="moon" /><span>°</span><span>,</span><span>简</span></div>
        <Icon name="cog" />
      </div>
    </footer>

    <div class="ghost" aria-hidden="true"><span class="g1">日</span><span class="g2">十</span><span class="g3">jing</span></div>
    <i class="knob"></i>
    <a class="brand" href="#">
      <svg width="122" height="100" viewBox="0 0 122 100">
        <path d="M10 40C28 2 110 -22 117 24C118 32 116 37 114 42H111C116 14 84 -2 40 19C24 27 14 35 10 40Z" fill="#93c320" />
        <path d="M65 16L89 30V39L80 43V80L65 82ZM92 36L111 48L98 62H92Z" fill="#d9dadf" />
        <path d="M10 57L27 47V75Q16 67 10 57ZM37 25L59 13V74L54 78H37ZM71 43L88 35V64L71 74Z" fill="#173f98" />
        <path d="M41 26L56 20V70L41 76Z" fill="#2f6cb3" opacity=".7" />
        <path d="M7 48C-8 84 30 112 80 84C108 70 120 46 119 41C106 68 66 88 38 84C14 82 4 68 7 48Z" fill="#173f98" />
      </svg>
      <span class="brand-text"><strong>土木工程网</strong><em>www.civilcn.com</em></span>
    </a>
  </div>
</template>

<style>
body { margin: 0; background: #444; }
.mixed { white-space: pre; }
.half { font-family: "Liberation Mono", monospace; font-size: 15px; }
</style>

<style scoped>
.desktop {
  position: relative;
  display: flex;
  flex-direction: column;
  min-height: 100vh;
  overflow: hidden;
  background: #444;
  color: #e2e2e2;
  font: 300 18px/20px "Noto Sans CJK SC", sans-serif;
}
* { box-sizing: border-box; }
button, input, select { font: inherit; color: inherit; background: none; border: 0; padding: 0; margin: 0; border-radius: 0; }
button { display: flex; align-items: center; justify-content: center; white-space: nowrap; }
svg { flex: none; display: block; }
i { flex: none; display: block; }

.title { display: flex; align-items: center; height: 34px; background: #fff; color: #000; padding-right: 20px; }
.title-logo { width: 22px; height: 24px; margin: 0 6px 0 3px; }
.title h1 { flex: 1; margin: 0; font: 400 19px/24px "Noto Sans", "Noto Sans CJK SC", sans-serif; }
.title button { width: 32px; margin-left: 38px; height: 32px; }

.menu { display: flex; gap: 25px; height: 32px; padding-left: 14px; font-size: 20px; background: linear-gradient(#505050, #3c3c3c); border-bottom: 1px solid #161616; }
.menu > button { height: 26px; }
.menu > button :deep(.half), .menu > button > .half { font-size: 17px; }
.menu u { text-underline-offset: 3px; }
.menu-end { display: flex; align-items: center; margin-left: auto; padding-right: 3px; }
.login { width: 120px; height: 22px; margin-top: 3px; padding: 0 4px 0 6px; background: #d0d0d0; color: #000; font-size: 13px; font-weight: 400; }
.login span { margin-left: 5px; margin-right: auto; }
.ws-label { margin: 0 5px 0 31px; font-size: 18px; color: #c4c4c4; }
.caret { border: 5px solid transparent; border-top: 8px solid currentColor; border-bottom: 0; }

.drop { position: relative; flex: none; width: 103px; height: 24px; margin: 0 1px 14px; background: #636363; }
.drop::after { content: ""; position: absolute; right: 10px; top: 50%; margin-top: -4px; border: 5px solid transparent; border-top: 8px solid #e6e6e6; border-bottom: 0; }
.drop select { display: block; appearance: none; width: 100%; height: 100%; padding: 0 0 2px 9px; color: #cfcfcf; font-size: 18px; line-height: 22px; }
.drop.wide { width: 178px; }
.drop.wide select { padding-left: 4px; }
.drop.workspace { width: 179px; height: 30px; margin: 0; background: #595959; }

.toolbar { display: flex; align-items: center; height: 49px; padding-left: 4px; background: #454545; }
.grip { background: radial-gradient(circle, #c8c8c8 1px, transparent 1px) 0 0 / 4px 4px; width: 8px; }
.toolbar .grip { height: 36px; margin-right: 1px; }
.tool { position: relative; flex: none; width: 46px; height: 44px; margin: 0 1px; border-radius: 5px; }
.tool.on { background: #5b87c5; }
.more::after { content: ""; position: absolute; right: 1px; bottom: 0; border: 3px solid #e0e0e0; border-left-color: transparent; border-top-color: transparent; }
.sep { width: 9px; height: 24px; background: linear-gradient(#1a1a1a, #1a1a1a) 4px 0 / 1px 100% no-repeat; }

.ribbon { display: flex; height: 61px; padding-left: 3px; }
.ribbon .grip { height: 52px; margin: 5px 2px 0 0; }
.ribbon-body { flex: 1; border-top: 2px solid #646464; background: #525252; color: #b4b4b4; }
.ribbon-tabs { display: flex; align-items: flex-end; height: 28px; padding-left: 8px; }
.ribbon-tabs button { height: 25px; padding-bottom: 2px; margin-right: 69px; }
.ribbon-tabs .current { width: 82px; padding-left: 18px; margin-right: 39px; background: linear-gradient(#606060, #4c4c4c); border: 1px solid #2e2e2e; border-bottom: 0; color: #e6e6e6; }
.ribbon-tabs .ribbon-min { gap: 7px; margin: 0 0 0 -20px; }
.pill { display: flex; align-items: center; justify-content: center; width: 20px; height: 11px; border-radius: 3px; background: #e4e8ec; color: #333; }
.ribbon-min .caret { border-width: 4px; border-top-width: 5px; border-bottom: 0; }
.ribbon-panel { height: 31px; padding: 1px 0 1px 4px; border: 2px solid #2a2a2a; border-width: 2px 0 2px 1px; background: linear-gradient(#474747, #393939); }
.ribbon-panel button { width: 104px; height: 25px; padding: 0 2px 2px 0; background: #484848; color: #ececec; }

.work { display: flex; flex: 1; min-height: 1046px; }
.left { display: flex; flex-direction: column; width: 278px; flex: none; padding-top: 10px; }
.grip-h { height: 6px; background: radial-gradient(circle, #c8c8c8 1px, transparent 1px) 0 0 / 4px 4px; }
.left .grip-h { margin: 0 8px 4px 2px; }
.strip { display: flex; flex-direction: column; align-items: flex-start; justify-content: flex-end; flex: 1; width: 60px; padding: 0 0 2px 5px; background: linear-gradient(90deg, #353535, #2b2b2b); border-right: 1px solid #000; }
.expand { width: 29px; height: 29px; margin: 0 0 16px 10px; background: #484848; border: 1px solid #222; border-radius: 4px; }
.expand::after { content: ""; border: 7px solid transparent; border-left: 8px solid #e4e4e4; border-right: 0; margin-left: 2px; }
.layout { display: grid; grid-template: 20px 20px / 23px 23px; gap: 1px; width: 54px; height: 66px; align-content: center; align-items: stretch; background: linear-gradient(#505c6c, #3f80d8); border: 1px solid #23456f; border-radius: 4px 0 0 4px; }
.layout i { background: linear-gradient(#6c737c, #5a6069); border: 1px solid #1f2c3c; border-radius: 2px; }

.views { display: grid; grid-template: 1fr 1fr / 1fr 1fr; gap: 5px; flex: 1; min-width: 0; padding-top: 7px; }
.view { position: relative; min-width: 0; background: #363636; overflow: hidden; }
.view::after { content: ""; position: absolute; inset: 0; border: 2px solid #313131; pointer-events: none; }
.view.active::after { border-color: #7c6f22; }
.view.persp { background: linear-gradient(#181818, #4c4c4c); }
.canvas { position: absolute; inset: 0; width: 100%; height: 100%; }
.labels { position: absolute; left: 6px; top: 9px; display: flex; gap: 12px; }
.labels button { font-size: 17px; line-height: 22px; color: #cacaca; }
.axis text { font: 400 17px "DejaVu Sans", sans-serif; }
.compass text { font: 400 13px "Noto Sans CJK SC", sans-serif; fill: #dcdcdc; text-anchor: middle; }
.compass.dim text { fill: #8c8c8c; font-size: 11px; }
.face { font: 300 15px "Noto Sans CJK SC", sans-serif; fill: #5a6568; text-anchor: middle; }
.face.lit { fill: #45597c; }

.command { flex: none; width: 304px; padding: 10px 0 0 7px; }
.command .grip-h { margin: 0 4px 5px 2px; }
.ptabs { display: flex; height: 40px; border-bottom: 1px solid #383838; }
.ptabs button { width: 47px; margin-right: 1px; background: #3a3a3a; border-radius: 8px 8px 0 0; }
.ptabs .current { background: #454545; margin-bottom: -1px; }
.cats { display: flex; gap: 2px; padding: 6px 0 0 7px; height: 49px; }
.cats button { width: 34px; height: 34px; border-radius: 4px; }
.cats .current { background: #5b87c5; }
.drop.kind { width: auto; height: 30px; margin: 0 6px 0 6px; background: #646464; }
.kinds { list-style: none; margin: 1px 6px 0 6px; padding: 0; background: #646464; box-shadow: 2px 2px 3px #2c2c2c; }
.kinds li { height: 28px; line-height: 25px; padding-left: 10px; color: #f2f2f2; }
.kinds .hovered { background: #496c97; }

.time { display: flex; height: 78px; padding-left: 3px; }
.time .grip { height: 62px; margin: 11px 2px 0 0; }
.time-body { flex: 1; display: flex; flex-direction: column; }
.slider { display: flex; gap: 2px; height: 40px; padding: 8px 0 7px 1px; }
.slider button { background: #606060; border-radius: 4px; color: #e0e0e0; }
.step { width: 22px; }
.thumb { width: 185px; }
.chev { width: 9px; height: 9px; border: 1px solid #b5b5b5; border-width: 0 0 1px 1px; transform: rotate(45deg); margin-left: 4px; }
.chev.right { transform: rotate(225deg); margin: 0 4px 0 0; }
.track-row { display: flex; height: 38px; border-top: 1px solid #0c0c0c; }
.mini { width: 64px; margin-right: 11px; }
.track { display: flex; flex: 1; list-style: none; margin: 0 64px 0 0; padding: 0 0 0 9px; height: 37px; background: #2a2a2a; font: 15px/14px "Liberation Mono", monospace; color: #b8b8b0; }
.track li { flex: 1; min-width: 0; height: 17px; border-left: 1px solid #6a6a6a; }
.track .major { height: 37px; border-left-color: #5c5c5c; }
.track span { display: block; width: 40px; margin: 18px 0 0 -21px; text-align: center; }
.track .now { position: relative; color: #e6e04a; }
.track .now::before { content: ""; position: absolute; left: -6px; top: 0; width: 11px; height: 37px; background: #87801f; }
.track .now span { position: relative; }

.status { display: flex; align-items: stretch; height: 80px; padding-left: 4px; }
.script { width: 148px; padding-top: 4px; flex: none; }
.pink { height: 35px; background: #dbc4c4; border: 1px solid #777; border-right-color: #fff; border-bottom-color: #fff; }
.script input { display: block; width: 100%; height: 37px; padding: 0 8px 15px 4px; background: #fff; border: 1px solid #888; border-color: #666 #fff #fff #888; color: #7a7a7a; font: 18px/20px "Liberation Mono", "Noto Sans CJK SC", monospace; }
.bar { width: 1px; height: 25px; background: #1a1a1a; }
.bar.tall { height: 74px; margin: 2px 5px 0 5px; }
.prompts { width: 622px; }
.prompts p { margin: 11px 0 17px; }
.coords { width: 674px; padding-top: 9px; }
.coord-row { display: flex; align-items: center; height: 26px; }
.coord-row > button { width: 24px; margin: 0 17px 0 11px; }
.coord-row > button + button { margin: 0 15px 0 0; }
.coord-row > button + button + button { margin: 0 11px 0 0; }
.coord-row label { display: flex; align-items: center; margin-right: 18px; }
.coord-row label input { width: 86px; height: 26px; margin-left: 5px; background: #585858; border: 1px solid #505050; }
.gridsize { margin-left: 4px; }
.tag-row { display: flex; align-items: center; height: 32px; margin-top: 8px; padding-left: 473px; color: #bcbcbc; }
.tag { width: 32px; height: 32px; margin: 0 4px 0 1px; background: #5b87c5; border-radius: 4px; }
.playback { width: 193px; padding-top: 9px; }
.play-row { display: flex; align-items: center; height: 25px; }
.play-row + .play-row { margin-top: 8px; }
.play-row button { position: relative; width: 24px; height: 25px; margin: 0 5px 0 6px; }
.play-row button:first-child { margin: 0 8px 0 3px; }
.play-row button.more { margin: 0 6px 0 4px; }
.play-row button.more::after { right: -5px; bottom: -6px; }
.frame { position: relative; width: 104px; height: 25px; margin: 0 2px 0 1px; background: #626262; }
.frame input { width: 80px; height: 25px; padding: 0 0 2px 4px; font: 15px "Liberation Mono", monospace; }
.frame i { position: absolute; right: 4px; border: 4px solid transparent; }
.up { top: 4px; border-top: 0 !important; border-bottom: 7px solid #ddd !important; }
.down { bottom: 4px; border-bottom: 0 !important; border-top: 7px solid #ddd !important; }
.keys { flex: 1; margin: 6px 440px 7px 0; background: #5a5a5a; border-radius: 5px; }

.taskbar { display: flex; height: 60px; background: linear-gradient(90deg, #0b0c1a 588px, #0a0b11 740px, #2e2523 900px, #2c2422 1040px, #17171a 1100px, #2a201e 1216px, #0b0f24 1465px, #101426 1640px, #1b1b1b); font-family: "Noto Sans", "Noto Sans CJK SC", sans-serif; font-weight: 400; color: #fff; }
.start { width: 72px; background: #0d0d0f; }
.search { display: flex; align-items: center; width: 516px; padding: 0 22px 0 13px; background: #f2f2f2; color: #222; font-size: 22px; }
.search input { flex: 1; min-width: 0; margin-left: 13px; line-height: 30px; }
.search input::placeholder { color: #333; opacity: 1; }
.tview { width: 72px; }
.task { justify-content: flex-start; width: 228px; margin-left: 11px; border-bottom: 3px solid #76b9ed; }
.task.folder { padding-left: 15px; gap: 12px; }
.task.edge { padding-left: 9px; gap: 4px; margin-left: 9px; }
.mail { width: 80px; padding-left: 8px; }
.task.max { width: 240px; margin-left: 8px; padding-left: 15px; gap: 4px; background: linear-gradient(90deg, #4d4544, #625854 40%, #4b4b58); }
.tray { padding: 3px 0 0 109px; font-size: 22px; line-height: 24px; }
.ime { display: flex; gap: 8px; align-items: center; height: 24px; margin-bottom: 7px; }
.ime b { background: #fff; color: #000; font-size: 20px; line-height: 22px; width: 22px; text-align: center; font-weight: 400; }

.ghost { position: absolute; right: 426px; bottom: 40px; width: 76px; height: 150px; font-weight: 700; color: #fff; opacity: .78; }
.ghost span { position: absolute; left: 0; }
.ghost .g1 { left: -12px; top: 3px; font-size: 80px; line-height: 80px; }
.g2 { top: 74px; font-size: 40px; line-height: 40px; }
.g3 { top: 86px; font: 600 40px/60px "Noto Sans", sans-serif; }
.knob { position: absolute; right: 320px; bottom: 213px; width: 16px; height: 16px; border-radius: 8px; background: #ddd; }
.brand { position: absolute; right: 15px; bottom: 0; width: 451px; height: 226px; display: flex; align-items: flex-start; padding: 62px 0 0 38px; background: #fdfdfd; color: #0a0a0a; text-decoration: none; }
.brand-text { display: flex; flex-direction: column; padding-top: 13px; }
.brand strong { font: italic 900 49px/48px "Noto Sans CJK SC", sans-serif; }
.brand em { font: italic 600 31px/32px "Noto Sans", sans-serif; }
</style>
